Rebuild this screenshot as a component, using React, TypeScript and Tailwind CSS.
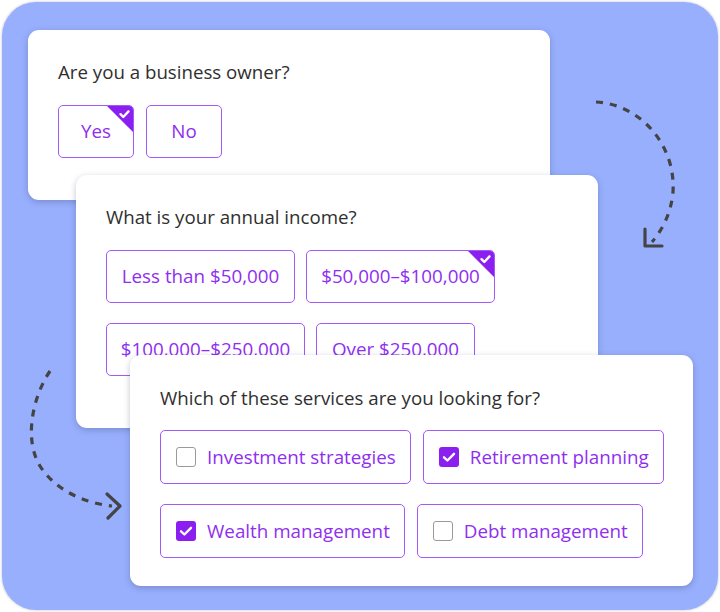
import type { ReactNode } from "react";

const font = { fontFamily: '"Open Sans", "Noto Sans", sans-serif' };

function Corner() {
  return (
    <span className="absolute right-0 top-0 w-[26px] h-[26px]">
      <svg viewBox="0 0 26 26" className="w-full h-full">
        <polygon points="0,0 26,0 26,26" fill="#8a1ff0" />
        <path d="M13.5 8.2 L16.3 11 L21.5 5.4" stroke="#fff" strokeWidth="2.4" fill="none" strokeLinecap="round" strokeLinejoin="round" />
      </svg>
    </span>
  );
}

function Choice({ label, selected = false, className = "" }: { label: string; selected?: boolean; className?: string }) {
  return (
    <div
      className={`relative overflow-hidden h-[53px] flex items-center justify-center rounded-[5px] border-[1.5px] border-[#a259f7] bg-white text-[18.8px] text-[#8f2ef0] ${className}`}
    >
      {label}
      {selected && <Corner />}
    </div>
  );
}

function Check({ label, checked = false }: { label: string; checked?: boolean }) {
  return (
    <div className="h-[54px] flex items-center gap-[11px] pl-[15px] pr-[14px] rounded-[5px] border-[1.5px] border-[#a259f7] bg-white text-[18.8px] text-[#8f2ef0]">
      {checked ? (
        <span className="w-5 h-5 rounded-[3px] bg-[#8a1ff0] flex items-center justify-center">
          <svg viewBox="0 0 20 20" className="w-5 h-5">
            <path d="M5 10.3 L8.4 13.5 L15 6.8" stroke="#fff" strokeWidth="2.4" fill="none" strokeLinecap="round" strokeLinejoin="round" />
          </svg>
        </span>
      ) : (
        <span className="w-5 h-5 rounded-[3px] border-[1.5px] border-[#9a9a9a] bg-white" />
      )}
      {label}
    </div>
  );
}

function Card({ children, className = "" }: { children: ReactNode; className?: string }) {
  return (
    <div className={`relative bg-white rounded-[11px] shadow-[0_2px_6px_rgba(40,50,90,0.28)] ${className}`}>
      {children}
    </div>
  );
}

function Question({ children }: { children: ReactNode }) {
  return <p className="text-[18.7px] leading-[28px] text-[#2f2f2f]">{children}</p>;
}

export default function App() {
  return (
    <div style={font} className="w-[720px] h-[612px] bg-white p-[2px]">
      <div className="relative w-full h-full rounded-[34px] bg-[#98affd] shadow-[0_0_2px_1px_rgba(0,0,0,0.12)] pt-[28px] pl-[26px]">
        <svg className="absolute inset-0 pointer-events-none" width="716" height="608" viewBox="2 2 716 608">
          <g stroke="#444" strokeWidth="3.2" fill="none">
            <path d="M596 102 C 640 104, 676 145, 673 192 C 671 214, 662 230, 652 242" strokeDasharray="7 7" />
            <path d="M645 229 L645 246 L662 246" strokeLinecap="round" strokeLinejoin="round" />
            <path d="M50 371 C 32 398, 24 440, 40 466 C 55 490, 84 503, 112 506" strokeDasharray="7 7" />
            <path d="M107 494 L120 506 L108 518" strokeLinecap="round" strokeLinejoin="round" />
          </g>
        </svg>

        <div className="relative flex flex-col items-start">
          <Card className="w-[522px] h-[170px] pt-[28px] pl-[30px]">
            <Question>Are you a business owner?</Question>
            <div className="flex gap-3 mt-[19px]">
              <Choice label="Yes" selected className="w-[76px]" />
              <Choice label="No" className="w-[76px]" />
            </div>
          </Card>

          <Card className="w-[522px] h-[253px] ml-[48px] -mt-[25px] pt-[28px] pl-[30px]">
            <Question>What is your annual income?</Question>
            <div className="flex gap-[11px] mt-[19px]">
              <Choice label="Less than $50,000" className="w-[189px]" />
              <Choice label="$50,000–$100,000" selected className="w-[189px]" />
            </div>
            <div className="flex gap-[11px] mt-[20px]">
              <Choice label="$100,000–$250,000" className="w-[199px]" />
              <Choice label="Over $250,000" className="w-[159px]" />
            </div>
          </Card>

          <Card className="w-[563px] h-[231px] ml-[102px] -mt-[73px] pt-[29px] pl-[30px]">
            <Question>Which of these services are you looking for?</Question>
            <div className="flex gap-3 mt-[18px]">
              <Check label="Investment strategies" />
              <Check label="Retirement planning" checked />
            </div>
            <div className="flex gap-3 mt-[20px]">
              <Check label="Wealth management" checked />
              <Check label="Debt management" />
            </div>
          </Card>
        </div>
      </div>
    </div>
  );
}
